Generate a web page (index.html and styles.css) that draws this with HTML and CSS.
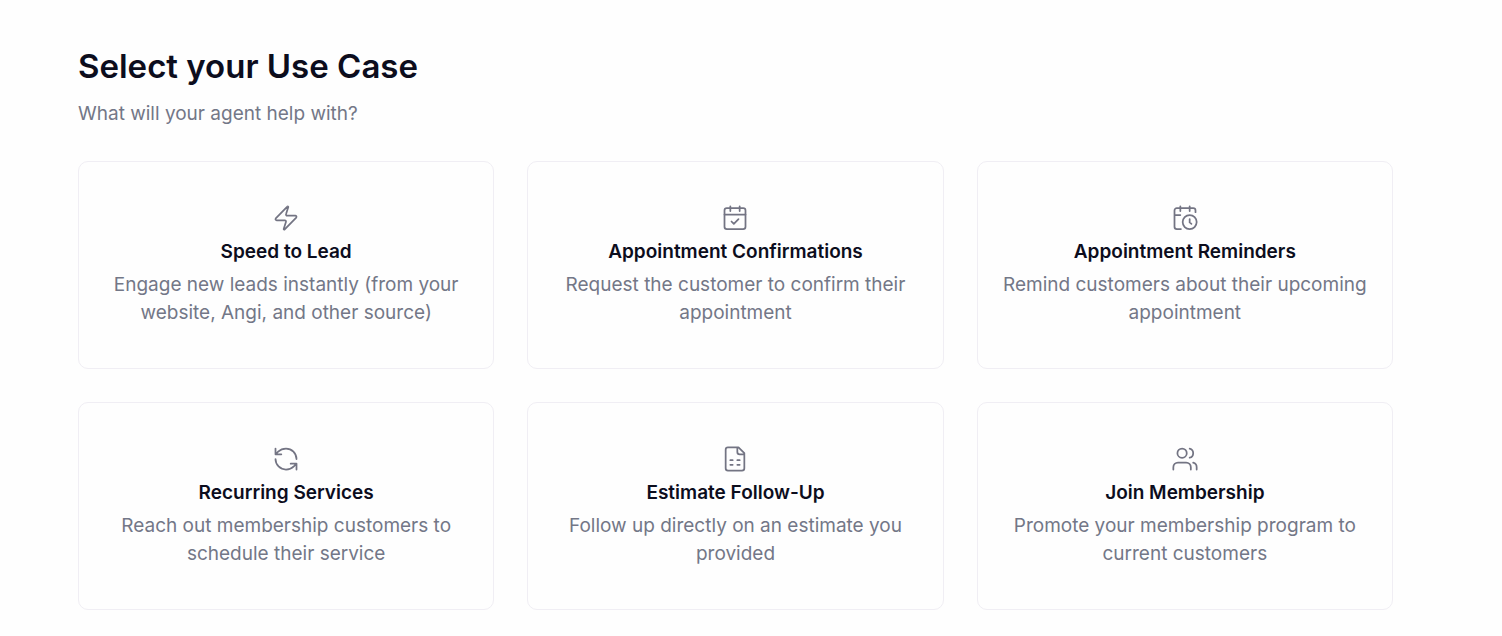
FILE: index.html
```html
<!DOCTYPE html>
<html lang="en">
<head>
<meta charset="utf-8">
<title>Select your Use Case</title>
<link rel="stylesheet" href="styles.css">
</head>
<body>
<main class="page">
  <header class="intro">
    <h1 class="title">Select your Use Case</h1>
    <p class="subtitle">What will your agent help with?</p>
  </header>
  <div class="grid">
    <button type="button" class="card">
      <svg class="icon" viewBox="0 0 24 24" aria-hidden="true"><path d="M4 14a1 1 0 0 1-.78-1.63l9.9-10.2a.5.5 0 0 1 .86.46l-1.92 6.02A1 1 0 0 0 13 10h7a1 1 0 0 1 .78 1.63l-9.9 10.2a.5.5 0 0 1-.86-.46l1.92-6.02A1 1 0 0 0 11 14z"/></svg>
      <span class="name">Speed to Lead</span>
      <span class="text">Engage new leads instantly (from your website, Angi, and other source)</span>
    </button>
    <button type="button" class="card">
      <svg class="icon" viewBox="0 0 24 24" aria-hidden="true"><path d="M8 2v4M16 2v4M3 9h18M9 15l2 2 4-4"/><rect x="3" y="3.500" width="18" height="18" rx="2"/></svg>
      <span class="name">Appointment Confirmations</span>
      <span class="text">Request the customer to confirm their appointment</span>
    </button>
    <button type="button" class="card">
      <svg class="icon" viewBox="0 0 24 24" aria-hidden="true"><path d="M21 7V5.500a2 2 0 0 0-2-2H5a2 2 0 0 0-2 2v14a2 2 0 0 0 2 2h3.500M16 2v4M8 2v4M3 9.500h5M17.500 17 16 15.800V13"/><circle cx="16" cy="15.500" r="6"/></svg>
      <span class="name">Appointment Reminders</span>
      <span class="text">Remind customers about their upcoming appointment</span>
    </button>
    <button type="button" class="card">
      <svg class="icon" viewBox="0 0 24 24" aria-hidden="true"><path d="M21 12a9 9 0 0 0-9-9 9.750 9.750 0 0 0-6.740 2.740L3 8M3 3v5h5M3 12a9 9 0 0 0 9 9 9.750 9.750 0 0 0 6.740-2.740L21 16M16 16h5v5"/></svg>
      <span class="name">Recurring Services</span>
      <span class="text">Reach out membership customers to schedule their service</span>
    </button>
    <button type="button" class="card">
      <svg class="icon" viewBox="0 0 24 24" aria-hidden="true"><path d="M15 2H6a2 2 0 0 0-2 2v16a2 2 0 0 0 2 2h12a2 2 0 0 0 2-2V7zM14 2v4a2 2 0 0 0 2 2h4M8 13h2M14 13h2M8 17h2M14 17h2"/></svg>
      <span class="name">Estimate Follow-Up</span>
      <span class="text">Follow up directly on an estimate you provided</span>
    </button>
    <button type="button" class="card">
      <svg class="icon" viewBox="0 0 24 24" aria-hidden="true"><path d="M17 21v-2a4 4 0 0 0-4-4H6a4 4 0 0 0-4 4v2"/><circle cx="9.500" cy="7" r="4"/><path d="M22 21v-2a4 4 0 0 0-3-3.870M16 3.130a4 4 0 0 1 0 7.750"/></svg>
      <span class="name">Join Membership</span>
      <span class="text">Promote your membership program to current customers</span>
    </button>
  </div>
</main>
</body>
</html>
```
FILE: styles.css
```css
* {
  box-sizing: border-box;
}

body {
  margin: 0;
  background: #fefefe;
  font-family: Inter, "Liberation Sans", sans-serif;
}

.page {
  padding: 46px 109px 24px 78px;
}

.title {
  margin: 0;
  color: #0c0d1d;
  font-size: 33px;
  font-weight: 600;
  line-height: 40px;
}

.subtitle {
  margin: 14px 0 33px;
  color: #737787;
  font-size: 19px;
  line-height: 28px;
}

.grid {
  display: grid;
  grid-template-columns: repeat(3, 1fr);
  gap: 33px;
}

.card {
  display: flex;
  flex-direction: column;
  align-items: center;
  padding: 42px 16px 41px;
  border: 1px solid #f0eef4;
  border-radius: 10px;
  background: #fefefe;
  font: inherit;
  text-align: center;
  cursor: pointer;
}

.icon {
  width: 28px;
  height: 28px;
  fill: none;
  stroke: #737483;
  stroke-width: 1.5;
  stroke-linecap: round;
  stroke-linejoin: round;
}

.name {
  margin: 6px 0 5px;
  color: #0c0d1d;
  font-size: 19px;
  font-weight: 600;
  line-height: 28px;
}

.text {
  color: #737787;
  font-size: 19px;
  line-height: 28px;
}
```
